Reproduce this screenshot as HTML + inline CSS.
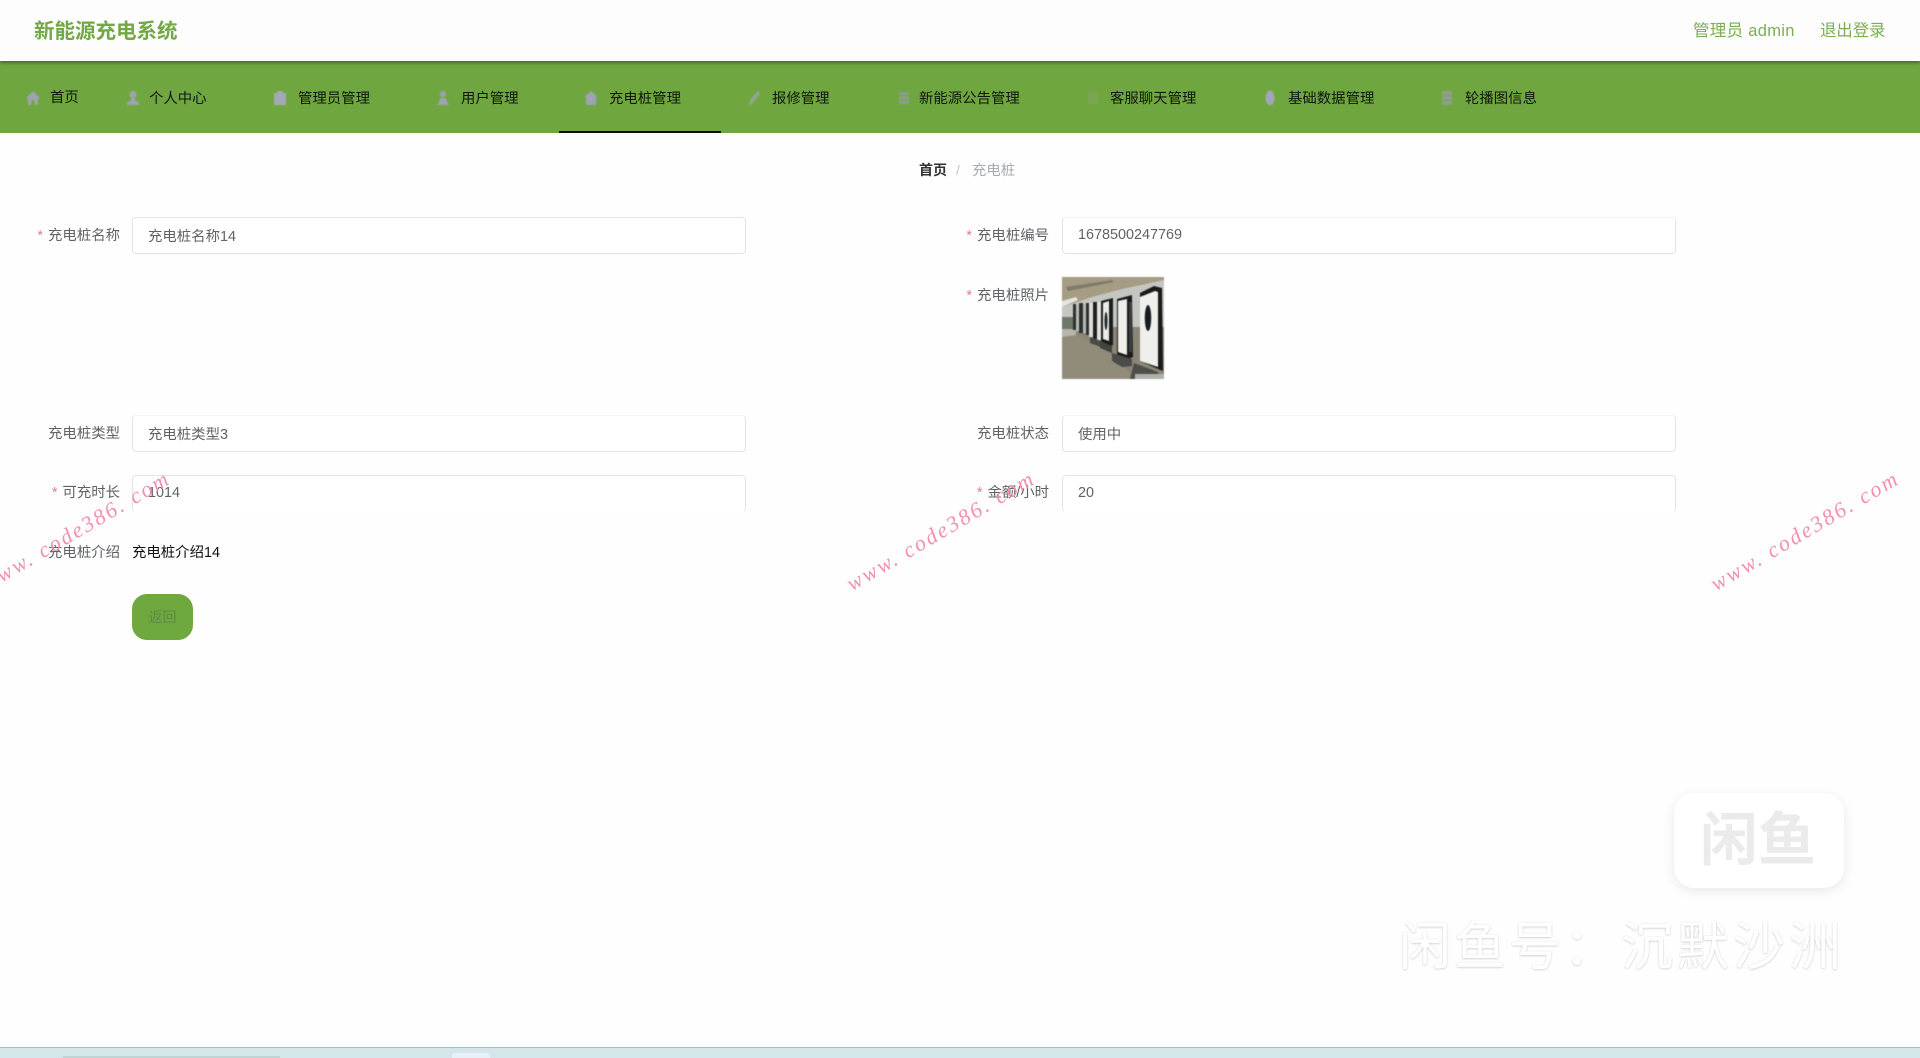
<!DOCTYPE html>
<html lang="zh-CN">
<head>
<meta charset="utf-8">
<title>新能源充电系统</title>
<style>
html,body{margin:0;padding:0;width:1920px;height:1058px;overflow:hidden;background:#fefefe;font-family:"Liberation Sans","Noto Sans CJK SC",sans-serif;}
.a{position:absolute;white-space:nowrap;}
#hd{left:0;top:0;width:1920px;height:61px;background:#fdfdfd;z-index:2;box-shadow:0 2px 3px rgba(60,70,40,.65);}
#nav{left:0;top:61px;width:1920px;height:72px;background:#6fa63f;}
.n{font-size:14.400px;line-height:20px;top:89px;color:#10180c;filter:blur(.3px);}
.i{top:90px;width:16px;height:16px;filter:blur(.7px);}
.l{font-size:14.400px;line-height:20px;color:#606266;text-align:right;filter:blur(.3px);}
.l b{color:#e0808a;font-weight:400;margin-right:5px;}
.v{font-size:14.400px;line-height:20px;color:#606266;filter:blur(.3px);}
.ip{box-sizing:border-box;height:37px;background:#fff;border:1px solid #e2e4e8;border-radius:4px;}
.wm{font-family:"Liberation Serif",serif;font-style:italic;font-size:22px;line-height:30px;letter-spacing:2.300px;color:#f58fb0;width:260px;text-align:center;transform:rotate(-30.5deg);z-index:5;}
</style>
</head>
<body>
<div class="a" id="hd"></div>
<div class="a" style="left:34px;top:18px;font-size:20.500px;line-height:28px;font-weight:700;color:#72a845;z-index:3;filter:blur(.3px);">新能源充电系统</div>
<div class="a" style="left:1693px;top:19px;font-size:16.500px;line-height:24px;letter-spacing:.3px;color:#7cae52;z-index:3;filter:blur(.3px);">管理员 admin</div>
<div class="a" style="left:1820px;top:19px;font-size:16.400px;line-height:24px;color:#7cae52;z-index:3;filter:blur(.3px);">退出登录</div>

<div class="a" id="nav"></div>
<div class="a" style="left:559px;top:131px;width:162px;height:2px;background:#0d0d0d;"></div>

<svg class="a i" style="left:25px" viewBox="0 0 16 16"><path d="M8 1 15 8 13 8 13 15 9.500 15 9.500 10 6.500 10 6.500 15 3 15 3 8 1 8Z" fill="#9ea3b3"/></svg>
<svg class="a i" style="left:125px" viewBox="0 0 16 16"><circle cx="8" cy="4.500" r="3.500" fill="#9ea3b3"/><path d="M6 8h4l.5 3 3.500 1v3H2v-3l3.500-1z" fill="#9ea3b3"/></svg>
<svg class="a i" style="left:272px" viewBox="0 0 16 16"><path d="M5 1h6v2h3v12H2V3h3z" fill="#a4a9b6"/></svg>
<svg class="a i" style="left:435px" viewBox="0 0 16 16"><circle cx="8" cy="4" r="3" fill="#9ea3b3"/><path d="M5.500 8h5l1 3 2.500 4H2l2.500-4z" fill="#9ea3b3"/></svg>
<svg class="a i" style="left:583px" viewBox="0 0 16 16"><path d="M8 1 15 7H13V15H3V7H1Z" fill="#9ea3b3"/></svg>
<svg class="a i" style="left:746px" viewBox="0 0 16 16"><path d="M12 1 14 4 8 11 5 15 3 14 4 10 10 3Z" fill="#96a49a"/></svg>
<svg class="a i" style="left:896px" viewBox="0 0 16 16"><path d="M3 2h10v3H3zM3 6.500h10v3H3zM3 11h10v3H3z" fill="#8e9f90"/></svg>
<svg class="a i" style="left:1085px" viewBox="0 0 16 16"><path d="M3 2h10v12H3z" fill="#7aa653"/></svg>
<svg class="a i" style="left:1262px" viewBox="0 0 16 16"><ellipse cx="8" cy="8" rx="4.500" ry="7.500" fill="#a1a6b8"/></svg>
<svg class="a i" style="left:1439px" viewBox="0 0 16 16"><path d="M3 1h10v4H3zM3 6h10v4H3zM3 11h10v4H3z" fill="#8e9f90"/></svg>

<div class="a n" style="left:50px;top:88px">首页</div>
<div class="a n" style="left:149px">个人中心</div>
<div class="a n" style="left:298px">管理员管理</div>
<div class="a n" style="left:461px">用户管理</div>
<div class="a n" style="left:609px">充电桩管理</div>
<div class="a n" style="left:772px">报修管理</div>
<div class="a n" style="left:919px">新能源公告管理</div>
<div class="a n" style="left:1110px">客服聊天管理</div>
<div class="a n" style="left:1288px">基础数据管理</div>
<div class="a n" style="left:1465px">轮播图信息</div>

<div class="a" style="left:919px;top:160px;font-size:14px;line-height:20px;font-weight:700;color:#303133;">首页</div>
<div class="a" style="left:956px;top:160px;font-size:14px;line-height:20px;color:#c0c4cc;">/</div>
<div class="a" style="left:972px;top:161px;font-size:14.400px;line-height:20px;color:#a8abb2;filter:blur(.3px);">充电桩</div>

<div class="a l" style="left:20px;width:100px;top:226px;"><b>*</b>充电桩名称</div>
<div class="a ip" style="left:132px;top:217px;width:614px;"></div>
<div class="a v" style="left:148px;top:227px;">充电桩名称14</div>

<div class="a l" style="left:949px;width:100px;top:226px;"><b>*</b>充电桩编号</div>
<div class="a ip" style="left:1062px;top:217px;width:614px;border-top-color:#f2f3f4;"></div>
<div class="a v" style="left:1078px;top:225px;">1678500247769</div>

<div class="a l" style="left:949px;width:100px;top:286px;"><b>*</b>充电桩照片</div>
<svg class="a" style="left:1062px;top:277px;filter:blur(.5px);" width="102" height="102" viewBox="0 0 102 102">
<rect width="102" height="102" fill="#8a8576"/>
<path d="M0 0H102V3L60 12 30 20 0 30Z" fill="#a69c84"/>
<path d="M0 30 30 20 60 12 102 3V50L0 50Z" fill="#c4c6c2"/>
<path d="M4 10 50 3 52 5 6 14Z" fill="#7e7a6c"/>
<path d="M0 24 14 20 16 23 0 30Z" fill="#e4e4e0"/>
<path d="M0 40H12V52H0Z" fill="#6d7868"/>
<path d="M0 52H14V60L0 62Z" fill="#b7b5ac"/>
<path d="M0 60 14 58 40 70 72 100V102H0Z" fill="#918c7a"/>
<path d="M11 27h3v26h-3zM17 26h4v30h-4zM24 26h3v32h-3z" fill="#2c322e"/>
<path d="M14 28h3v26h-3zM21 27h3v29h-3z" fill="#b8bcb8"/>
<path d="M27 26h4v34h-4z" fill="#dedfdb"/>
<path d="M31 25h4v37h-4z" fill="#1e201e"/>
<path d="M35 25h4v38h-4z" fill="#e2e3df"/>
<path d="M28 60 39 64 39 70 28 66Z" fill="#4a4a46"/>
<path d="M39 24 51 21V68L46 70 39 64Z" fill="#1c1d1b"/>
<path d="M41 26 47 24V64L41 62Z" fill="#ebebe7"/>
<ellipse cx="44" cy="44" rx="1.500" ry="9" fill="#20262a"/>
<path d="M38 64 50 69 50 76 38 71Z" fill="#444440"/>
<path d="M55 22 70 18 71 80 66 82 55 78Z" fill="#1b1c1a"/>
<path d="M56 24 65 22V78L56 75Z" fill="#eeeeea"/>
<path d="M67 25h3v50h-3z" fill="#3c3f3f"/>
<path d="M50 76 70 82 70 89 60 90 50 84Z" fill="#4b4b47"/>
<path d="M78 16 92 9 100 11 101 94 96 92 78 84Z" fill="#1a1b19"/>
<path d="M78 20 93 14 96 15 96 90 78 84Z" fill="#efefeb"/>
<ellipse cx="86" cy="41" rx="3.200" ry="13" fill="#161c22"/>
<path d="M72 86 96 95V102H68Z" fill="#4e4e4a"/>
<rect x="73" y="97" width="29" height="5" fill="#aeb0ae"/>
</svg>

<div class="a l" style="left:20px;width:100px;top:424px;">充电桩类型</div>
<div class="a ip" style="left:132px;top:415px;width:614px;border-top-color:#f6f6f7;"></div>
<div class="a v" style="left:148px;top:425px;">充电桩类型3</div>

<div class="a l" style="left:949px;width:100px;top:424px;">充电桩状态</div>
<div class="a ip" style="left:1062px;top:415px;width:614px;border-top-color:#f6f6f7;"></div>
<div class="a v" style="left:1078px;top:425px;">使用中</div>

<div class="a l" style="left:20px;width:100px;top:483px;"><b>*</b>可充时长</div>
<div class="a ip" style="left:132px;top:475px;width:614px;height:37px;border-bottom-color:#fff;"></div>
<div class="a v" style="left:148px;top:483px;">1014</div>

<div class="a l" style="left:949px;width:100px;top:483px;"><b>*</b>金额/小时</div>
<div class="a ip" style="left:1062px;top:475px;width:614px;height:37px;border-bottom-color:#fff;"></div>
<div class="a v" style="left:1078px;top:483px;">20</div>

<div class="a l" style="left:20px;width:100px;top:543px;">充电桩介绍</div>
<div class="a" style="left:132px;top:543px;font-size:14.400px;line-height:20px;color:#111;filter:blur(.2px);">充电桩介绍14</div>

<div class="a" style="left:132px;top:594px;width:61px;height:46px;border-radius:15px;background:#70a840;color:#5c8a44;font-size:14px;line-height:46px;text-align:center;">返回</div>

<div class="a wm" style="left:-54px;top:516px;">www. code386. com</div>
<div class="a wm" style="left:811px;top:516px;">www. code386. com</div>
<div class="a wm" style="left:1675px;top:516px;">www. code386. com</div>

<div class="a" style="left:1674px;top:793px;width:170px;height:95px;border-radius:20px;background:#fff;box-shadow:0 3px 12px rgba(0,0,0,.09);"></div>
<div class="a" style="left:1700px;top:805px;font-size:58px;line-height:72px;font-weight:700;color:#ebebec;">闲鱼</div>
<div class="a" style="left:1399px;top:918px;font-size:52px;line-height:60px;letter-spacing:3px;color:#fff;text-shadow:0 1px 2px rgba(0,0,0,.14),0 0 2px rgba(0,0,0,.08);">闲鱼号：</div>
<div class="a" style="left:1621px;top:918px;font-size:52px;line-height:60px;letter-spacing:4px;color:#fff;text-shadow:0 1px 2px rgba(0,0,0,.14),0 0 2px rgba(0,0,0,.08);">沉默沙洲</div>

<div class="a" style="left:0;top:1047px;width:1920px;height:11px;box-sizing:border-box;background:#d4e6ea;border-top:1px solid #a9bcbc;"></div>
<div class="a" style="left:63px;top:1056px;width:217px;height:2px;background:#c0d4d6;"></div>
<div class="a" style="left:452px;top:1053px;width:38px;height:5px;border-radius:3px 3px 0 0;background:#e6f0f8;"></div>
</body>
</html>
